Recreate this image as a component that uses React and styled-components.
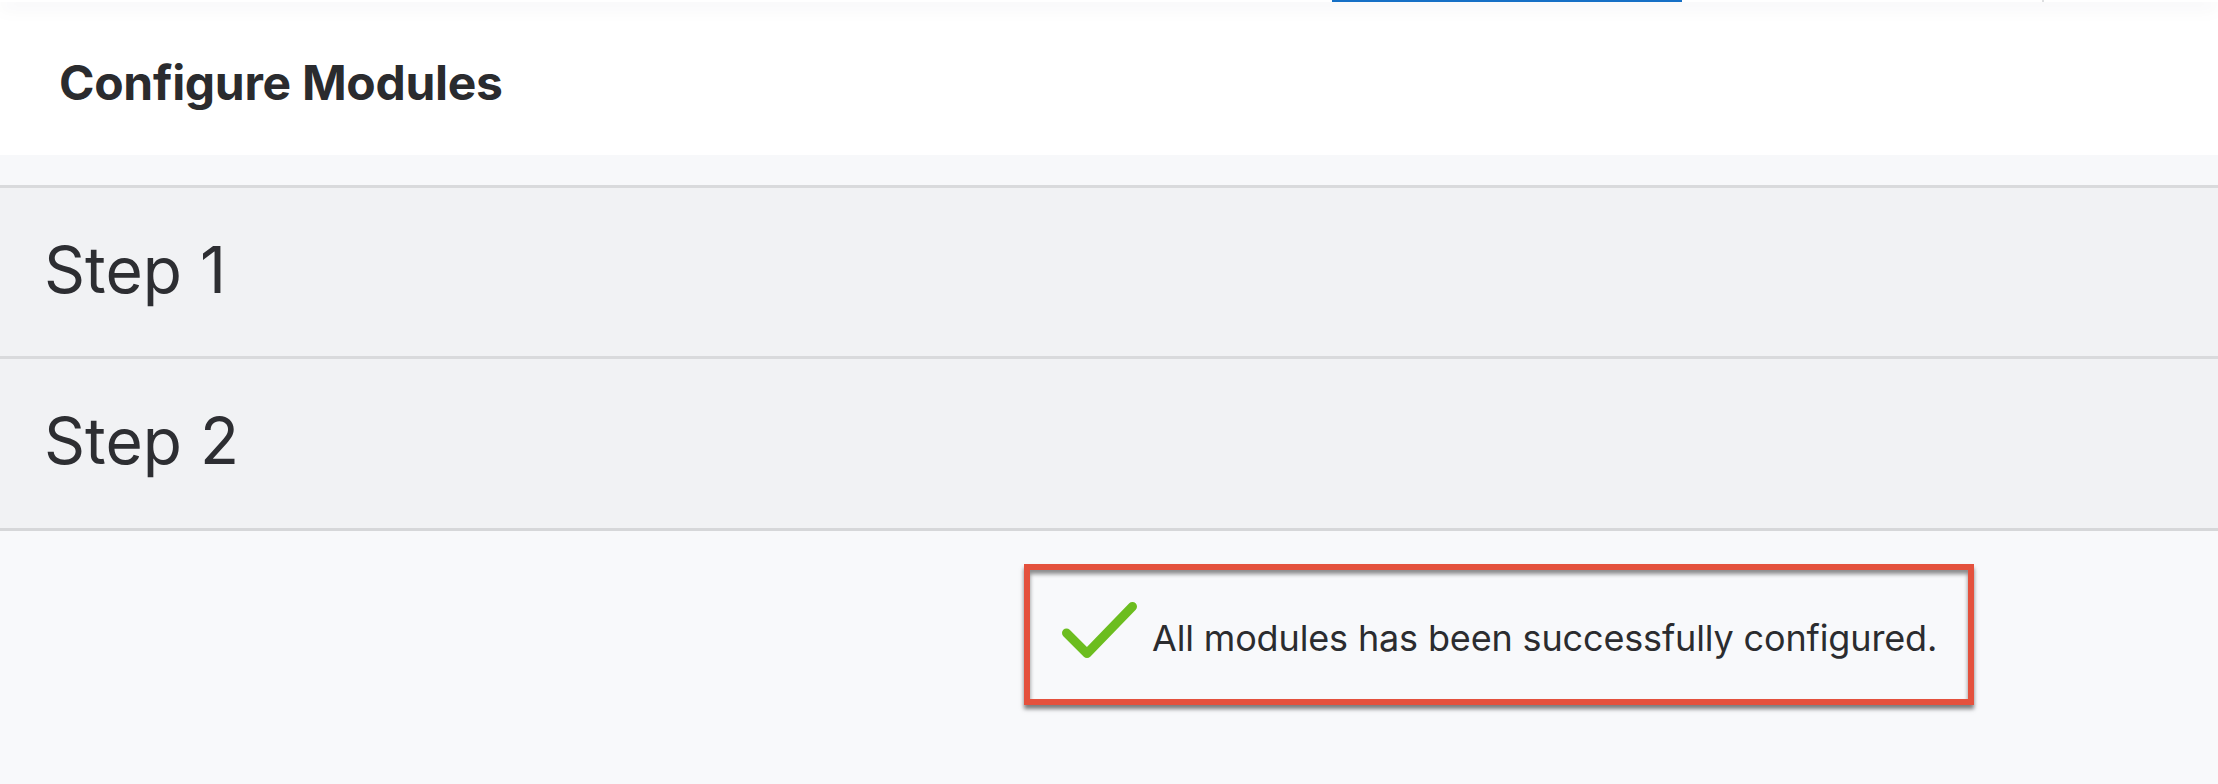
import React from "react";
import styled, { createGlobalStyle } from "styled-components";

const Global = createGlobalStyle`
  html, body { margin: 0; padding: 0; background: #f8f9fb; }
  body { font-family: Inter, "Noto Sans", Arial, sans-serif; color: #2b2c2f; }
  * { box-sizing: border-box; }
`;

const Page = styled.div`
  width: 2218px;
  height: 784px;
  overflow: hidden;
  display: flex;
  flex-direction: column;
  background: #f8f9fb;
`;

const TopNav = styled.div`
  position: relative;
  z-index: 2;
  height: 2px;
  flex: 0 0 2px;
  background: #ffffff;
  display: flex;
  align-items: stretch;
  box-shadow: 0 3px 18px rgba(40, 50, 70, 0.22);
`;

const NavTab = styled.div`
  width: ${(p) => p.$w}px;
  margin-left: ${(p) => p.$ml}px;
  background: ${(p) => (p.$active ? "#1670c6" : "transparent")};
`;

const NavDivider = styled.div`
  width: 2px;
  margin-left: ${(p) => p.$ml}px;
  background: #dedfe1;
`;

const Header = styled.header`
  position: relative;
  z-index: 1;
  height: 153px;
  flex: 0 0 153px;
  background: #ffffff;
  padding: 51px 0 0 59px;
`;

const Title = styled.h1`
  margin: 0;
  font-family: Inter, "Noto Sans", Arial, sans-serif;
  font-weight: 700;
  font-size: 48px;
  line-height: normal;
  color: #2a2b2e;
  letter-spacing: -0.3px;
`;

const Gap = styled.div`
  height: 30px;
  flex: 0 0 30px;
  background: #f7f8fa;
`;

const Steps = styled.div`
  display: flex;
  flex-direction: column;
  border-bottom: 3px solid #d6d7d9;
`;

const StepRow = styled.div`
  height: ${(p) => p.$h}px;
  border-top: 3px solid #d9dadc;
  background: #f1f2f4;
  padding: 43px 0 0 44px;
`;

const StepLabel = styled.div`
  font-family: Inter, "Noto Sans", Arial, sans-serif;
  font-weight: 400;
  font-size: 64px;
  line-height: normal;
  color: #2d2e32;
`;

const Bottom = styled.div`
  flex: 1;
  background: #f8f9fb;
  padding: 33px 0 0 1024px;
`;

const Highlight = styled.div`
  width: 950px;
  height: 141px;
  border: 6px solid #e4513d;
  box-shadow: 0 4px 4px rgba(0, 0, 0, 0.5), inset 0 4px 4px rgba(0, 0, 0, 0.45);
  display: flex;
  align-items: flex-start;
  padding: 32px 0 0 31px;
  gap: 15px;
`;

const CheckIcon = styled.svg`
  flex: 0 0 auto;
  display: block;
`;

const Message = styled.div`
  margin-top: 14px;
  font-family: Inter, "Noto Sans", Arial, sans-serif;
  font-size: 36px;
  line-height: normal;
  color: #2b2c2f;
  white-space: nowrap;
  letter-spacing: -0.15px;
`;

export default function App() {
  return (
    <Page>
      <Global />
      <TopNav>
        <NavTab $ml={1332} $w={350} $active />
        <NavDivider $ml={360} />
      </TopNav>
      <Header>
        <Title>Configure Modules</Title>
      </Header>
      <Gap />
      <Steps>
        <StepRow $h={171}>
          <StepLabel>Step 1</StepLabel>
        </StepRow>
        <StepRow $h={172}>
          <StepLabel>Step 2</StepLabel>
        </StepRow>
      </Steps>
      <Bottom>
        <Highlight>
          <CheckIcon width="76" height="58" viewBox="0 0 76 58">
            <path
              d="M5.5 31 L26 51.5 L71.5 4.5"
              fill="none"
              stroke="#6cbd1f"
              strokeWidth="9"
              strokeLinecap="round"
              strokeLinejoin="round"
            />
          </CheckIcon>
          <Message>All modules has been successfully configured.</Message>
        </Highlight>
      </Bottom>
    </Page>
  );
}
